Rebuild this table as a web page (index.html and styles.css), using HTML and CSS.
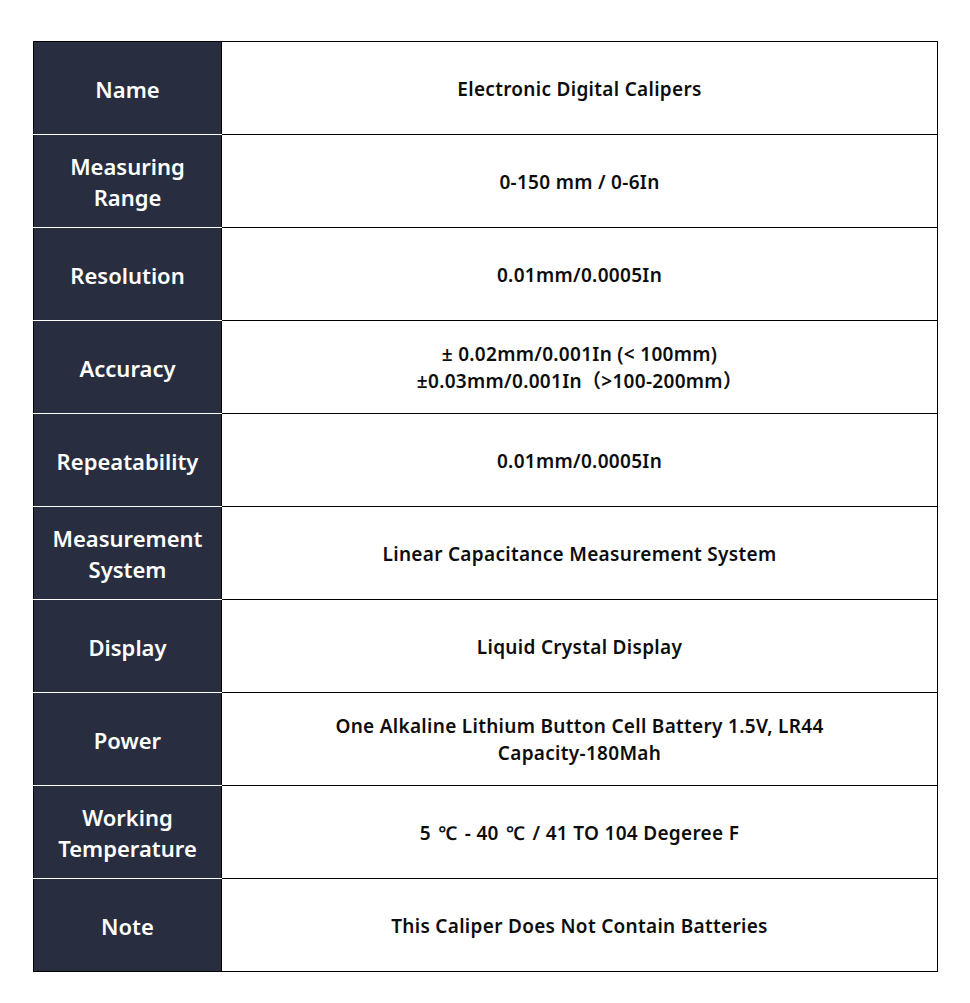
FILE: index.html
```html
<!DOCTYPE html>
<html>
<head>
<meta charset="utf-8">
<link rel="stylesheet" href="styles.css">
</head>
<body>
<table class="spec">
  <tr><th>Name</th><td>Electronic Digital Calipers</td></tr>
  <tr><th>Measuring<br>Range</th><td>0-150 mm / 0-6In</td></tr>
  <tr><th>Resolution</th><td>0.01mm/0.0005In</td></tr>
  <tr><th>Accuracy</th><td>± 0.02mm/0.001In (&lt; 100mm)<br>±0.03mm/0.001In（&gt;100-200mm）</td></tr>
  <tr><th>Repeatability</th><td>0.01mm/0.0005In</td></tr>
  <tr><th>Measurement<br>System</th><td>Linear Capacitance Measurement System</td></tr>
  <tr><th>Display</th><td>Liquid Crystal Display</td></tr>
  <tr><th>Power</th><td>One Alkaline Lithium Button Cell Battery 1.5V, LR44<br>Capacity-180Mah</td></tr>
  <tr><th>Working<br>Temperature</th><td>5 <span class="deg">℃</span> - 40 <span class="deg">℃</span> / 41 TO 104 Degeree F</td></tr>
  <tr><th>Note</th><td>This Caliper Does Not Contain Batteries</td></tr>
</table>
</body>
</html>
```
FILE: styles.css
```css
html, body {
  margin: 0;
  padding: 0;
  background: #ffffff;
}
body {
  padding: 41px 0 0 33px;
  font-family: "Noto Sans", "Noto Sans CJK SC", sans-serif;
}
.spec {
  border-collapse: collapse;
  width: 905px;
  border: 1px solid #000;
}
.spec th,
.spec td {
  height: 90px;
  padding: 2px 0 0 0;
  text-align: center;
  vertical-align: middle;
}
.spec th {
  width: 187px;
  background: #282e3f;
  color: #ffffff;
  font-size: 22px;
  font-weight: 600;
  line-height: 31px;
  border-bottom: 1px solid #ffffff;
  border-right: 1px solid #000;
}
.spec td {
  color: #0d0d0d;
  font-size: 19px;
  font-weight: 600;
  letter-spacing: 0.3px;
  line-height: 27px;
  border-bottom: 1px solid #000;
}
.spec .deg {
  display: inline-block;
  padding: 0 2px;
}
.spec tr:last-child th {
  border-bottom: 1px solid #000;
}
```
